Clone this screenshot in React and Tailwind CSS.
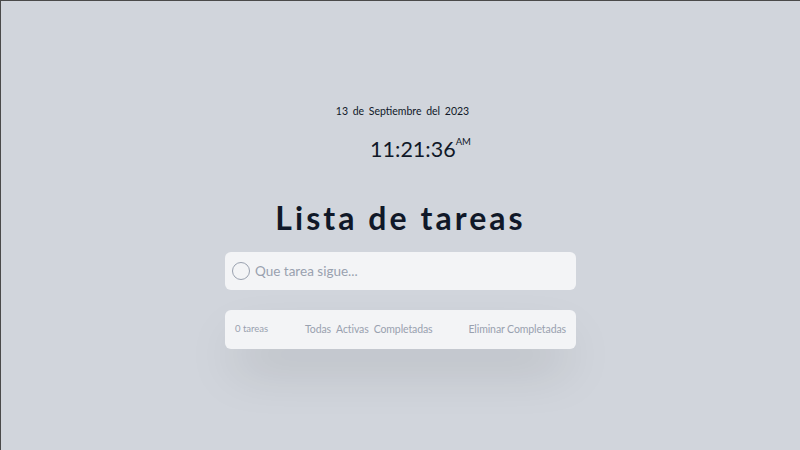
import React from 'react'

const App = () => {
  return (
    <div
      className="h-[450px] w-[800px] overflow-hidden border-t border-l border-[#4a4a4a] bg-gray-300"
      style={{ fontFamily: 'Lato, "Noto Sans", sans-serif' }}
    >
      <div className="flex flex-col items-center pt-[101px]">
        <div className="ml-1 text-[10.5px] leading-[18px] text-gray-900 [word-spacing:2px]">13 de Septiembre del 2023</div>
        <div className="mt-[16px] ml-10 flex items-start text-gray-900">
          <span className="text-[21.5px] leading-[26px]">11:21:36</span>
          <span className="text-[9.5px] leading-[12px]">AM</span>
        </div>
        <h1 className="mt-[36px] text-[32px] leading-[40px] font-bold tracking-[0.095em] text-gray-900">Lista de tareas</h1>

        <div className="mt-[14px] flex h-[38px] w-[351px] items-center gap-[5px] rounded-md bg-gray-100 px-[7px]">
          <span className="h-[18px] w-[18px] rounded-full border border-gray-400" />
          <span className="text-[13.5px] text-gray-400">Que tarea sigue...</span>
        </div>

        <div className="mt-[20px] flex h-[39px] w-[351px] items-center whitespace-nowrap rounded-md bg-gray-100 px-[10px] text-[10.5px] tracking-[-0.1px] text-gray-400 shadow-2xl">
          <span className="w-[70px] text-[9.5px] tracking-normal">0 tareas</span>
          <div className="flex gap-[5px]">
            <span>Todas</span>
            <span>Activas</span>
            <span>Completadas</span>
          </div>
          <span className="ml-auto">Eliminar Completadas</span>
        </div>
      </div>
    </div>
  )
}

export default App
